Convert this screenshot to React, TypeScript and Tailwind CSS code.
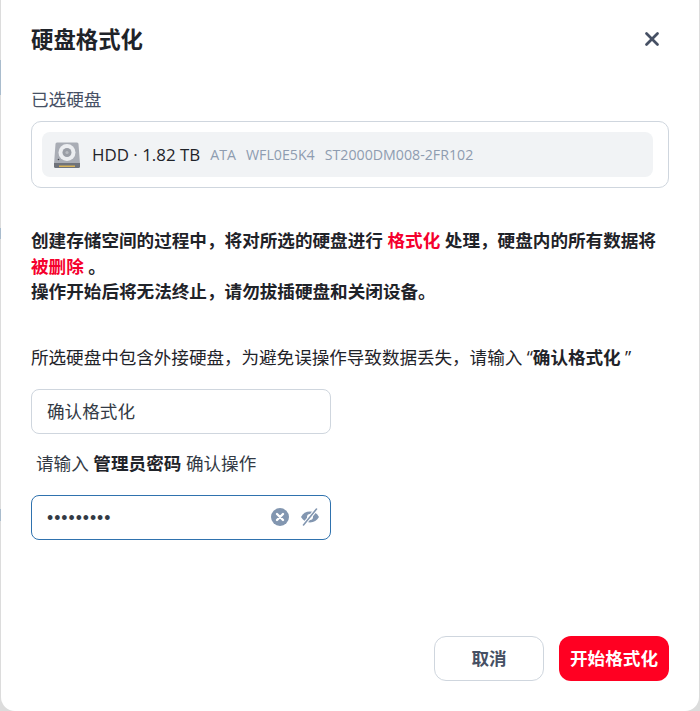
import { X } from "lucide-react";

const font = '"Open Sans", "Noto Sans CJK SC", sans-serif';

function HddIcon() {
  return (
    <svg width="28" height="28" viewBox="0 0 28 28" aria-hidden="true">
      <path d="M4 1.5h20a1.5 1.5 0 0 1 1.5 1.5l1.5 20H1L2.5 3A1.5 1.5 0 0 1 4 1.5z" fill="#a9adb5" />
      <path d="M1 22h26v3.5a1.5 1.5 0 0 1-1.5 1.500h-23A1.5 1.5 0 0 1 1 25.5z" fill="#6f737b" />
      <circle cx="14" cy="11.5" r="8.5" fill="#eceef1" />
      <circle cx="14" cy="11.5" r="4.5" fill="#9a9ea6" />
      <circle cx="14" cy="11.5" r="1.6" fill="#b9bcc2" />
      <rect x="6" y="24.5" width="16" height="1.5" fill="#d8b45a" />
      <circle cx="5.5" cy="18.5" r="0.8" fill="#3f4249" />
    </svg>
  );
}

function ClearIcon() {
  return (
    <svg width="18" height="18" viewBox="0 0 18 18" aria-hidden="true">
      <circle cx="9" cy="9" r="9" fill="#8296b0" />
      <path d="M6 6l6 6M12 6l-6 6" stroke="#fff" strokeWidth="2.4" strokeLinecap="round" />
    </svg>
  );
}

function EyeOffIcon() {
  return (
    <svg width="20" height="18" viewBox="0 0 20 18" aria-hidden="true">
      <path d="M1 9c2-3.6 5-5.4 9-5.4S17 5.400 19 9c-2 3.600-5 5.400-9 5.400S3 12.600 1 9z" fill="#8296b0" />
      <circle cx="10" cy="9" r="3" fill="#fff" />
      <path d="M16.500 1L3.500 17" stroke="#fff" strokeWidth="3.600" />
      <path d="M16.500 1L3.500 17" stroke="#8296b0" strokeWidth="1.600" strokeLinecap="round" />
    </svg>
  );
}

export default function App() {
  return (
    <div className="flex h-[711px] w-[700px] bg-[#dcdcdc] pr-px" style={{ fontFamily: font }}>
      <div className="flex w-px flex-col">
        <div className="mt-[60px] h-[35px] bg-[#a9bccd]" />
        <div className="mt-[133px] h-[11px] bg-[#a9bccd]" />
        <div className="mt-[270px] h-[12px] bg-[#a9bccd]" />
      </div>
      <div className="flex h-[711px] flex-1 flex-col rounded-b-[14px] bg-white px-[30px] pt-[22px] text-[#1f2329]">
        <div className="flex h-[36px] items-center justify-between">
          <h1 className="text-[22.400px] leading-[36px] font-bold text-[#1f2329]">硬盘格式化</h1>
          <button type="button" className="mr-[6px] mb-[2px] text-[#465064]">
            <X size={22} strokeWidth={3} aria-hidden="true" />
          </button>
        </div>

        <p className="mt-[29px] text-[17.600px] leading-[24px] text-[#465064]">已选硬盘</p>
        <div className="mt-[10px] rounded-[10px] border border-[#cfd6de] py-[10px] pr-[15px] pl-[10px]">
          <div className="flex h-[45px] items-center rounded-[8px] bg-[#f1f3f5] pl-[11px]">
            <HddIcon />
            <span className="ml-[11px] text-[16.900px] text-[#1f2329]">HDD · 1.82 TB</span>
            <span className="ml-[10px] text-[14.200px] text-[#8e9cb0]">ATA</span>
            <span className="ml-[10px] text-[14.200px] text-[#8e9cb0]">WFL0E5K4</span>
            <span className="ml-[10px] text-[14.200px] text-[#8e9cb0]">ST2000DM008-2FR102</span>
          </div>
        </div>

        <div className="mt-[40px] text-[17.600px] leading-[25.500px] font-bold text-[#1f2329]">
          <p>
            创建存储空间的过程中，将对所选的硬盘进行 <span className="text-[#f5002d]">格式化</span> 处理，硬盘内的所有数据将{" "}
            <span className="text-[#f5002d]">被删除</span> 。
          </p>
          <p>操作开始后将无法终止，请勿拔插硬盘和关闭设备。</p>
        </div>

        <p className="mt-[40px] text-[17.600px] leading-[24px] tracking-[-0.05px] text-[#1f2329]">
          所选硬盘中包含外接硬盘，为避免误操作导致数据丢失，请输入 “<b className="font-bold">确认格式化</b> ”
        </p>

        <div className="mt-[20px] flex h-[45px] w-[300px] items-center rounded-[8px] border border-[#cfd6de] px-[15px] text-[17.600px] text-[#333a45]">
          确认格式化
        </div>

        <p className="mt-[17px] pl-[5px] text-[17.600px] leading-[24px] text-[#333a45]">
          请输入 <b className="font-bold text-[#1f2329]">管理员密码</b> 确认操作
        </p>

        <div className="mt-[20px] flex h-[45px] w-[300px] items-center rounded-[8px] border border-[#2f72ae] pr-[10px] pl-[15px]">
          <span className="flex-1 pt-[4px] text-[17.600px] leading-none tracking-[1px] text-[#333a45]" style={{ fontFamily: '"Liberation Sans", sans-serif' }}>
            •••••••••
          </span>
          <ClearIcon />
          <span className="ml-[11px] flex">
            <EyeOffIcon />
          </span>
        </div>

        <div className="mt-[96px] flex justify-end gap-[15px]">
          <button type="button" className="h-[45px] w-[110px] rounded-[12px] border border-[#cfd6de] bg-white text-[17.600px] font-bold text-[#465064]">
            取消
          </button>
          <button type="button" className="h-[45px] w-[110px] rounded-[12px] bg-[#ff0022] text-[17.600px] font-bold text-white">
            开始格式化
          </button>
        </div>
      </div>
    </div>
  );
}
